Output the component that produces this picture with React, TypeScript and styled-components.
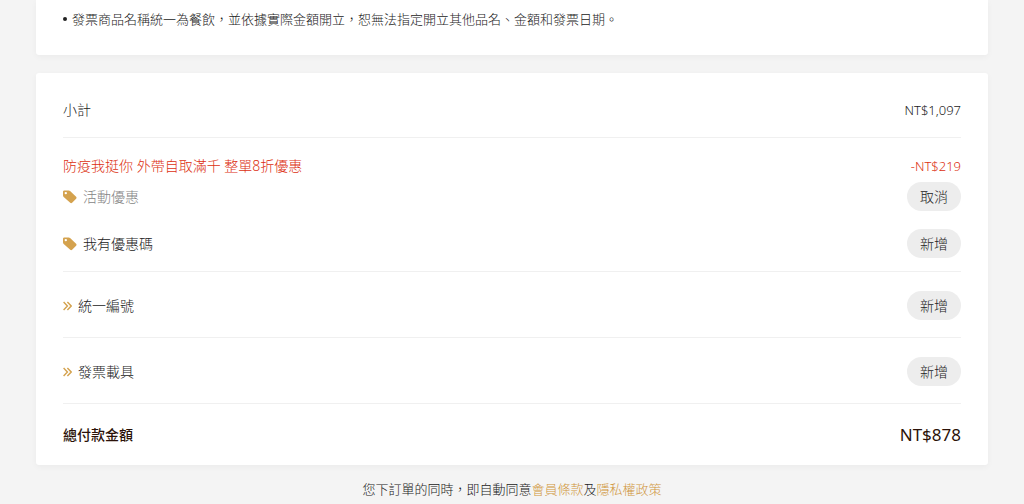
import React from 'react';
import styled, { createGlobalStyle, css } from 'styled-components';

const GlobalStyle = createGlobalStyle`
  *, *::before, *::after { box-sizing: border-box; }
  body {
    margin: 0;
    background: #f4f4f4;
    color: #222;
    font-family: "Noto Sans", "Noto Sans CJK TC", sans-serif;
    font-size: 14px;
    font-weight: 300;
    line-height: 20px;
  }
`;

const Page = styled.main`
  display: flex;
  flex-direction: column;
  padding: 0 36px;
`;

const Card = styled.section<{ $continued?: boolean }>`
  background: #fff;
  border-radius: ${(p) => (p.$continued ? '0 0 3px 3px' : '3px')};
  box-shadow: 0 2px 6px rgba(0, 0, 0, 0.04);
  padding: ${(p) => (p.$continued ? '9px 27px 26px' : '9px 27px 0')};
  margin-bottom: ${(p) => (p.$continued ? '18px' : '14px')};
`;

const Notes = styled.ul`
  list-style: none;
  margin: 0;
  padding: 0;
  font-size: 13px;
`;

const Note = styled.li`
  display: flex;
  align-items: center;
  gap: 5px;
  &::before {
    content: '';
    flex: none;
    width: 4px;
    height: 4px;
    border-radius: 50%;
    background: #222;
  }
`;

const divider = css`
  border-bottom: 1px solid #f0f0f0;
`;

const Row = styled.div`
  display: flex;
  align-items: center;
  justify-content: space-between;
`;

const SubtotalRow = styled(Row)`
  ${divider}
  height: 56px;
`;

const Discounts = styled.div`
  ${divider}
  display: flex;
  flex-direction: column;
  gap: 18px;
  padding: 18px 0 13px;
`;

const AppliedDiscount = styled.div`
  display: flex;
  flex-direction: column;
  gap: 6px;
`;

const DiscountRow = styled(Row)`
  color: #dc2f10;
`;

const OptionRow = styled(Row)`
  ${divider}
  padding: 19px 0 17px;
`;

const TotalRow = styled(Row)`
  height: 61px;
  color: #2b1208;
`;

const Amount = styled.span`
  font-size: 13px;
`;

const Label = styled.span<{ $muted?: boolean }>`
  display: flex;
  align-items: center;
  gap: 6px;
  color: ${(p) => (p.$muted ? '#858585' : 'inherit')};
`;

const TotalLabel = styled.span`
  font-weight: 500;
`;

const TotalAmount = styled.span`
  font-size: 17px;
  font-weight: 400;
`;

const PillButton = styled.button`
  width: 54px;
  height: 29px;
  padding: 0;
  border: 0;
  border-radius: 15px;
  background: #ededed;
  color: inherit;
  font: inherit;
  cursor: pointer;
`;

const Icon = styled.svg`
  flex: none;
  display: block;
  color: #d4a24e;
`;

const Terms = styled.p`
  margin: 0;
  padding-bottom: 5px;
  font-size: 13px;
  text-align: center;
`;

const TermsLink = styled.a`
  color: #d0943a;
  text-decoration: none;
`;

const TagIcon = () => (
  <Icon width="14" height="14" viewBox="0 0 14 14" fill="currentColor" aria-hidden="true">
    <path
      fillRule="evenodd"
      d="M0 1.7C0 1 .6.4 1.3.4h4.4c.5 0 1 .2 1.4.6l6 5.8c.6.6.6 1.3 0 1.9l-4 4.1c-.5.5-1.3.5-1.9 0L.7 7C.2 6.500 0 6 0 5.500zM2.800 1.900a1.200 1.200 0 1 0 0 2.400 1.200 1.200 0 0 0 0-2.400z"
    />
  </Icon>
);

const ChevronsIcon = () => (
  <Icon
    width="9"
    height="10"
    viewBox="0 0 9 10"
    fill="none"
    stroke="currentColor"
    strokeWidth="1.4"
    aria-hidden="true"
  >
    <path d="M0.600 1 4.400 5 0.600 9M4.400 1 8.200 5 4.400 9" />
  </Icon>
);

const options = ['統一編號', '發票載具'];

export default function App() {
  return (
    <>
      <GlobalStyle />
      <Page lang="zh-Hant">
        <Card $continued>
          <Notes>
            <Note>發票商品名稱統一為餐飲，並依據實際金額開立，恕無法指定開立其他品名、金額和發票日期。</Note>
          </Notes>
        </Card>

        <Card>
          <SubtotalRow>
            <span>小計</span>
            <Amount>NT$1,097</Amount>
          </SubtotalRow>

          <Discounts>
            <AppliedDiscount>
              <DiscountRow>
                <span>防疫我挺你 外帶自取滿千 整單8折優惠</span>
                <Amount>-NT$219</Amount>
              </DiscountRow>
              <Row>
                <Label id="promo" $muted>
                  <TagIcon />
                  活動優惠
                </Label>
                <PillButton type="button" aria-describedby="promo">取消</PillButton>
              </Row>
            </AppliedDiscount>
            <Row>
              <Label id="coupon">
                <TagIcon />
                我有優惠碼
              </Label>
              <PillButton type="button" aria-describedby="coupon">新增</PillButton>
            </Row>
          </Discounts>

          {options.map((name, i) => (
            <OptionRow key={name}>
              <Label id={`option-${i}`}>
                <ChevronsIcon />
                {name}
              </Label>
              <PillButton type="button" aria-describedby={`option-${i}`}>新增</PillButton>
            </OptionRow>
          ))}

          <TotalRow>
            <TotalLabel>總付款金額</TotalLabel>
            <TotalAmount>NT$878</TotalAmount>
          </TotalRow>
        </Card>

        <Terms>
          您下訂單的同時，即自動同意<TermsLink href="#terms">會員條款</TermsLink>及
          <TermsLink href="#privacy">隱私權政策</TermsLink>
        </Terms>
      </Page>
    </>
  );
}
